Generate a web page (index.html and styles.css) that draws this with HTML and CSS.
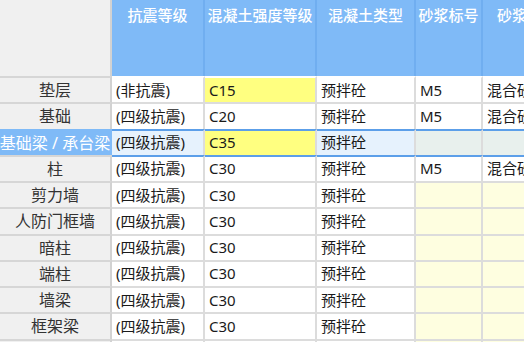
FILE: index.html
```html
<!DOCTYPE html>
<html lang="zh-CN">
<head>
<meta charset="utf-8">
<title>构件材料设置</title>
<link rel="stylesheet" href="styles.css">
</head>
<body>
<div class="sheet">
  <div class="row head">
    <div class="cell corner"></div>
    <div class="cell hc">抗震等级</div>
    <div class="cell hc">混凝土强度等级</div>
    <div class="cell hc">混凝土类型</div>
    <div class="cell hc">砂浆标号</div>
    <div class="cell hc">砂浆类型</div>
  </div>
  <div class="row first">
    <div class="cell rh">垫层</div>
    <div class="cell">(非抗震)</div>
    <div class="cell yellow">C15</div>
    <div class="cell">预拌砼</div>
    <div class="cell">M5</div>
    <div class="cell">混合砂浆</div>
  </div>
  <div class="row">
    <div class="cell rh">基础</div>
    <div class="cell">(四级抗震)</div>
    <div class="cell">C20</div>
    <div class="cell">预拌砼</div>
    <div class="cell">M5</div>
    <div class="cell">混合砂浆</div>
  </div>
  <div class="row selected">
    <div class="cell rh">基础梁 / 承台梁</div>
    <div class="cell">(四级抗震)</div>
    <div class="cell yellow">C35</div>
    <div class="cell">预拌砼</div>
    <div class="cell dim"></div>
    <div class="cell dim"></div>
  </div>
  <div class="row after-sel">
    <div class="cell rh">柱</div>
    <div class="cell">(四级抗震)</div>
    <div class="cell">C30</div>
    <div class="cell">预拌砼</div>
    <div class="cell">M5</div>
    <div class="cell">混合砂浆</div>
  </div>
  <div class="row">
    <div class="cell rh">剪力墙</div>
    <div class="cell">(四级抗震)</div>
    <div class="cell">C30</div>
    <div class="cell">预拌砼</div>
    <div class="cell pale"></div>
    <div class="cell pale"></div>
  </div>
  <div class="row">
    <div class="cell rh">人防门框墙</div>
    <div class="cell">(四级抗震)</div>
    <div class="cell">C30</div>
    <div class="cell">预拌砼</div>
    <div class="cell pale"></div>
    <div class="cell pale"></div>
  </div>
  <div class="row">
    <div class="cell rh">暗柱</div>
    <div class="cell">(四级抗震)</div>
    <div class="cell">C30</div>
    <div class="cell">预拌砼</div>
    <div class="cell pale"></div>
    <div class="cell pale"></div>
  </div>
  <div class="row">
    <div class="cell rh">端柱</div>
    <div class="cell">(四级抗震)</div>
    <div class="cell">C30</div>
    <div class="cell">预拌砼</div>
    <div class="cell pale"></div>
    <div class="cell pale"></div>
  </div>
  <div class="row">
    <div class="cell rh">墙梁</div>
    <div class="cell">(四级抗震)</div>
    <div class="cell">C30</div>
    <div class="cell">预拌砼</div>
    <div class="cell pale"></div>
    <div class="cell pale"></div>
  </div>
  <div class="row">
    <div class="cell rh">框架梁</div>
    <div class="cell">(四级抗震)</div>
    <div class="cell">C30</div>
    <div class="cell">预拌砼</div>
    <div class="cell pale"></div>
    <div class="cell pale"></div>
  </div>
  <div class="row">
    <div class="cell rh"></div>
    <div class="cell"></div>
    <div class="cell"></div>
    <div class="cell"></div>
    <div class="cell pale"></div>
    <div class="cell pale"></div>
  </div>
</div>
</body>
</html>
```
FILE: styles.css
```css
html, body {
  margin: 0;
  padding: 0;
  background: #ffffff;
  overflow: hidden;
}

body {
  width: 524px;
  height: 342px;
  font-family: "Noto Sans", "Noto Sans CJK SC", sans-serif;
  font-size: 15px;
  color: #1a1a1a;
}

.sheet {
  width: 573px;
}

.row {
  display: grid;
  grid-template-columns: 112px 93px 112px 99px 67px 90px;
  height: 26.25px;
}

.cell {
  box-sizing: border-box;
  border-right: 2px solid #dcdcdc;
  border-top: 2px solid #dcdcdc;
  background: #ffffff;
  padding-left: 4px;
  display: flex;
  align-items: center;
  white-space: nowrap;
  overflow: hidden;
  line-height: 1;
}

.row.head {
  height: 76px;
}

.head .cell {
  border-top: none;
  align-items: flex-start;
  justify-content: center;
  padding: 8px 0 0 0;
}

.head .corner {
  background: #f0f0f0;
  border-right: 2px solid #d2d2d2;
}

.head .hc {
  background: #7fbaf7;
  color: #ffffff;
  font-weight: 500;
  border-right: 2px solid #70aef0;
}

.rh {
  background: #f0f0f0;
  color: #333333;
  justify-content: center;
  padding-left: 0;
  font-size: 16px;
  border-right: 2px solid #d2d2d2;
  border-top-color: #d6d6d6;
}

.first .cell {
  border-top-color: #ffffff;
}

.first .rh {
  border-top-color: #d6d6d6;
}

.yellow {
  background: #ffff80;
}

.pale {
  background: #fefee0;
}

.selected .cell {
  background: #e6f2fd;
  border-top-color: #5c9fe9;
}

.selected .yellow {
  background: #ffff80;
}

.selected .dim {
  background: #e8f0ed;
}

.selected .rh {
  background: #7fbaf7;
  color: #ffffff;
  border-top-color: #7fbaf7;
  border-right-color: #7fbaf7;
}

.after-sel .cell {
  border-top-color: #5c9fe9;
}

.after-sel .rh {
  border-top-color: #d6d6d6;
}
```
